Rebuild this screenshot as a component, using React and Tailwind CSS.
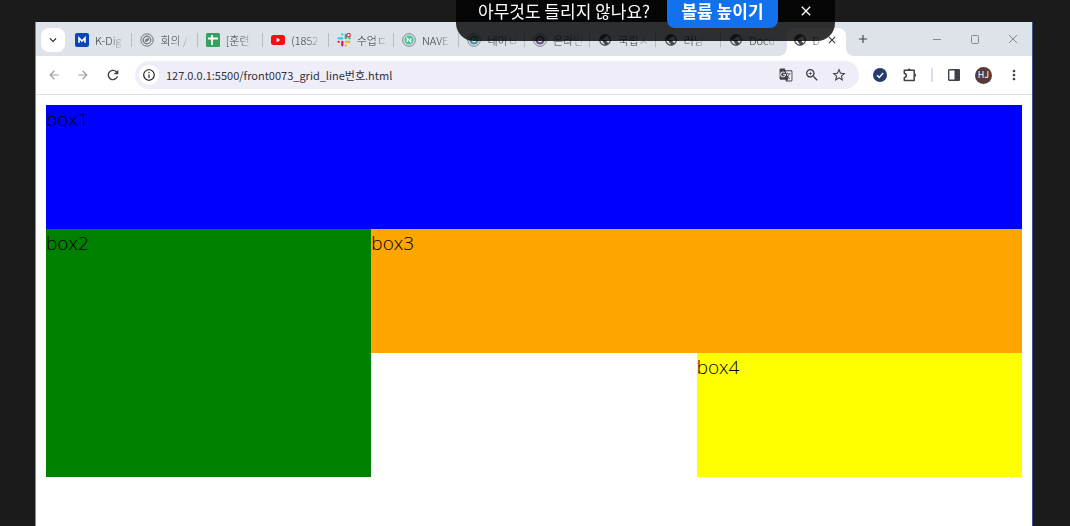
import React from "react";
import {
  MdArrowBack,
  MdArrowForward,
  MdRefresh,
  MdInfoOutline,
  MdPublic,
  MdClose,
  MdAdd,
  MdExpandMore,
  MdGTranslate,
  MdZoomIn,
  MdStarBorder,
  MdMoreVert,
} from "react-icons/md";

function MIcon() {
  return (
    <svg viewBox="0 0 14 14" className="size-3.5">
      <rect width="14" height="14" rx="2" fill="#0b46b4" />
      <path d="M4 9.800V5L7 8l3-3v4.800" fill="none" stroke="#fff" strokeWidth="1.600" />
    </svg>
  );
}

function SwirlIcon() {
  return (
    <svg viewBox="0 0 14 14" className="size-3.5" fill="none" stroke="#70747a">
      <circle cx="7" cy="7" r="6.200" />
      <circle cx="7" cy="7" r="3.800" strokeWidth="1.200" />
      <path d="M5 8.600c.2-2.400 2-3.600 4-3.400-.2 2.200-1.600 3.600-4 3.400z" fill="#70747a" strokeWidth=".4" />
    </svg>
  );
}

function SheetIcon() {
  return (
    <svg viewBox="0 0 14 14" className="size-3.5">
      <rect width="14" height="14" rx="1.500" fill="#34a25c" />
      <path d="M2 5.500h10M6 2v10" stroke="#fff" strokeWidth="1.800" />
    </svg>
  );
}

function VideoIcon() {
  return (
    <svg viewBox="0 0 14 14" className="size-3.5">
      <rect y="2" width="14" height="10" rx="2.500" fill="#f60d12" />
      <path d="M5.600 4.800v4.400L9.400 7z" fill="#fff" />
    </svg>
  );
}

function SlackIcon() {
  return (
    <svg viewBox="0 0 14 14" className="size-3.5" fill="none" strokeWidth="2.300" strokeLinecap="round">
      <path d="M1.600 5.300h3.600M5.300 1.500v.1" stroke="#36c5f0" />
      <path d="M5.300 8.800v3.600M1.600 8.800h.1" stroke="#e01e5a" />
      <path d="M8.800 8.800h3.600M8.800 12.400v.1" stroke="#ecb22e" />
      <path d="M8.800 1.800v3.400M12.400 5.300h.1" stroke="#2eb67d" />
      <circle cx="11.600" cy="2.200" r="1.700" fill="#fff" stroke="#d52a48" strokeWidth="1.200" />
    </svg>
  );
}

function RingIcon({ color, letter }) {
  return (
    <svg viewBox="0 0 14 14" className="size-3.5" fill="none">
      <circle cx="7" cy="7" r="6.300" stroke="#7d8288" />
      <circle cx="7" cy="7" r="4.600" fill={color} />
      {letter ? (
        <path d="M5.300 9V5.200L8.700 9V5.200" stroke="#fff" strokeWidth="1.200" />
      ) : (
        <circle cx="7" cy="7" r="1.800" stroke="#fff" />
      )}
    </svg>
  );
}

const globe = <MdPublic className="size-3.5 text-[#45484d]" />;

const tabs = [
  { title: "K-Dig", icon: <MIcon /> },
  { title: "회의 /", icon: <SwirlIcon /> },
  { title: "[훈련", icon: <SheetIcon /> },
  { title: "(1852", icon: <VideoIcon /> },
  { title: "수업ㄷ", icon: <SlackIcon /> },
  { title: "NAVE", icon: <RingIcon color="#4cc594" letter /> },
  { title: "네이ㅂ", icon: <RingIcon color="#4a99a8" /> },
  { title: "온라인", icon: <RingIcon color="#665b88" /> },
  { title: "국립ㅅ", icon: globe },
  { title: "러닝", icon: globe },
  { title: "Docu", icon: globe },
];

function Tab({ title, icon, last }) {
  return (
    <li className="flex min-w-0 items-center pt-0.5">
      <button type="button" className="flex min-w-0 flex-1 items-center gap-1.5 pl-2 text-left">
        <span className="shrink-0">{icon}</span>
        <span className="whitespace-nowrap [mask-image:linear-gradient(to_right,black_55%,rgb(0_0_0/0.25))]">
          {title}
        </span>
      </button>
      {!last && <span className="h-3.5 w-px shrink-0 bg-[#b9bbc2]" />}
    </li>
  );
}

function ActiveTab() {
  return (
    <li className="relative mt-1.5 mr-1.5 flex min-w-0 items-center rounded-t-lg bg-white pr-2 pb-1 pl-1.5">
      <svg viewBox="0 0 8 8" className="absolute bottom-0 -left-2 size-2" fill="#fff">
        <path d="M8 0v8H0a8 8 0 0 0 8-8z" />
      </svg>
      <svg viewBox="0 0 8 8" className="absolute -right-2 bottom-0 size-2" fill="#fff">
        <path d="M0 0v8h8a8 8 0 0 1-8-8z" />
      </svg>
      <span className="mr-1.5 shrink-0">{globe}</span>
      <span className="[mask-image:linear-gradient(to_right,black,rgb(0_0_0/0.3))]">D</span>
      <button type="button" aria-label="탭 닫기" className="ml-auto shrink-0 text-[#303236]">
        <MdClose className="size-3" />
      </button>
    </li>
  );
}

function TabStrip() {
  return (
    <header className="flex h-[34px] items-stretch bg-[#dee3ea] pl-[5px] text-[11px] font-light text-[#303338]">
      <button
        type="button"
        aria-label="탭 검색"
        className="mt-1.5 mr-0.5 grid h-6 w-6 shrink-0 place-items-center rounded-lg bg-white text-[#202124]"
      >
        <MdExpandMore className="size-3.5" />
      </button>
      <ul className="grid max-w-[785px] min-w-0 flex-1 grid-cols-12">
        {tabs.map((tab, i) => (
          <Tab key={tab.title} {...tab} last={i === tabs.length - 1} />
        ))}
        <ActiveTab />
      </ul>
      <button type="button" aria-label="새 탭" className="px-1 text-[#45484d]">
        <MdAdd className="size-3.5" />
      </button>
      <div className="ml-auto flex shrink-0 items-center gap-6 pr-3 text-[#85888e]">
        <button type="button" aria-label="최소화">
          <svg viewBox="0 0 14 14" className="size-3.5" fill="none" stroke="currentColor">
            <path d="M3 7.500h8" />
          </svg>
        </button>
        <button type="button" aria-label="최대화">
          <svg viewBox="0 0 14 14" className="size-3.5" fill="none" stroke="currentColor">
            <rect x="3.500" y="3.500" width="7" height="8" rx="1" />
          </svg>
        </button>
        <button type="button" aria-label="닫기">
          <svg viewBox="0 0 14 14" className="size-3.5" fill="none" stroke="currentColor">
            <path d="M3 3l8 8M11 3l-8 8" />
          </svg>
        </button>
      </div>
    </header>
  );
}

function Toolbar() {
  return (
    <nav className="flex h-[39px] items-center border-b border-[#dedfe2] bg-white pr-2.5 pl-[11px] text-[#3e4146]">
      <div className="flex gap-[15px] pr-3.5">
        <button type="button" aria-label="뒤로" className="text-[#9c9fa3]">
          <MdArrowBack className="size-3.5" />
        </button>
        <button type="button" aria-label="앞으로" className="text-[#9c9fa3]">
          <MdArrowForward className="size-3.5" />
        </button>
        <button type="button" aria-label="새로고침">
          <MdRefresh className="size-4" />
        </button>
      </div>
      <div className="flex h-7 min-w-0 flex-1 items-center rounded-full bg-[#efedf8] pr-3 pl-1">
        <button
          type="button"
          aria-label="사이트 정보"
          className="grid size-5 shrink-0 place-items-center rounded-full bg-white text-[#202124]"
        >
          <MdInfoOutline className="size-3.5" />
        </button>
        <input
          type="text"
          aria-label="주소창"
          defaultValue="127.0.0.1:5500/front0073_grid_line번호.html"
          className="ml-[7px] min-w-0 flex-1 bg-transparent text-[11px] text-[#303338] outline-none"
        />
        <div className="flex items-center gap-[11px]">
          <button type="button" aria-label="번역">
            <MdGTranslate className="size-3.5" />
          </button>
          <button type="button" aria-label="확대">
            <MdZoomIn className="size-4" />
          </button>
          <button type="button" aria-label="북마크">
            <MdStarBorder className="size-4" />
          </button>
        </div>
      </div>
      <div className="flex items-center pl-3.5">
        <button type="button" aria-label="확장 프로그램 확인">
          <svg viewBox="0 0 14 14" className="size-3.5" fill="none">
            <circle cx="7" cy="7" r="7" fill="#263b6e" />
            <path d="M4 7.200l2.200 2.200L10.200 5" stroke="#fff" strokeWidth="1.400" />
          </svg>
        </button>
        <button type="button" aria-label="확장 프로그램" className="ml-[15px]">
          <svg viewBox="0 0 16 16" className="size-4" fill="none" stroke="#3e4146" strokeWidth="1.500">
            <path d="M2.300 3.300h9.900v10.200H2.300v-3.100c2.600 0 2.600-4 0-4z" strokeLinejoin="round" />
            <path d="M5.600 3a1.600 1.600 0 0 1 3.200 0zM12.500 6.600a1.600 1.600 0 0 1 0 3.200z" fill="#3e4146" stroke="none" />
          </svg>
        </button>
        <span className="ml-[13px] h-3.5 w-0.5 bg-[#d6def5]" />
        <button type="button" aria-label="측면 패널" className="ml-3.5">
          <svg viewBox="0 0 14 14" className="size-3.5">
            <rect x="1.700" y="1.700" width="10.600" height="10.600" rx=".6" fill="none" stroke="#3e4146" strokeWidth="1.400" />
            <path d="M7.500 1.500H12v11H7.500z" fill="#3e4146" />
          </svg>
        </button>
        <button
          type="button"
          aria-label="프로필"
          className="ml-3.5 grid size-[17px] place-items-center rounded-full bg-[#573b36] text-[9px] text-white"
        >
          HJ
        </button>
        <button type="button" aria-label="메뉴" className="ml-3.5">
          <MdMoreVert className="size-4" />
        </button>
      </div>
    </nav>
  );
}

function VolumeNotice() {
  return (
    <aside className="fixed top-0 left-[456px] flex h-[41px] w-[379px] items-start rounded-b-[18px] bg-black/80 pl-[22px] text-[17px] leading-[22px] text-white">
      <p className="w-[189px] shrink-0 whitespace-nowrap">아무것도 들리지 않나요?</p>
      <button
        type="button"
        className="h-7 w-[111px] shrink-0 rounded-b-lg bg-[#1272ee] pb-1.5 font-bold whitespace-nowrap"
      >
        볼륨 높이기
      </button>
      <button type="button" aria-label="알림 닫기" className="ml-5 grid h-[22px] place-items-center">
        <MdClose className="size-4" />
      </button>
    </aside>
  );
}

export default function App() {
  return (
    <div className="flex min-h-screen flex-col bg-[#1b1b1b] pt-[22px] pr-[37px] pl-[35px] font-['Noto_Sans_CJK_KR',sans-serif]">
      <div className="flex flex-1 flex-col border-r border-l border-r-[#3d5688] border-l-[#7d8b9b] bg-white">
        <TabStrip />
        <Toolbar />
        <main className="grid auto-rows-[124px] grid-cols-3 p-2.5 font-['Open_Sans','Noto_Sans_CJK_KR',sans-serif] text-[19px] leading-7 font-light text-black">
          <div className="col-span-3 bg-[#0000ff]">box1</div>
          <div className="row-span-2 bg-[#008000]">box2</div>
          <div className="col-span-2 bg-[#ffa500]">box3</div>
          <div className="col-start-3 bg-[#ffff00]">box4</div>
        </main>
      </div>
      <VolumeNotice />
    </div>
  );
}
